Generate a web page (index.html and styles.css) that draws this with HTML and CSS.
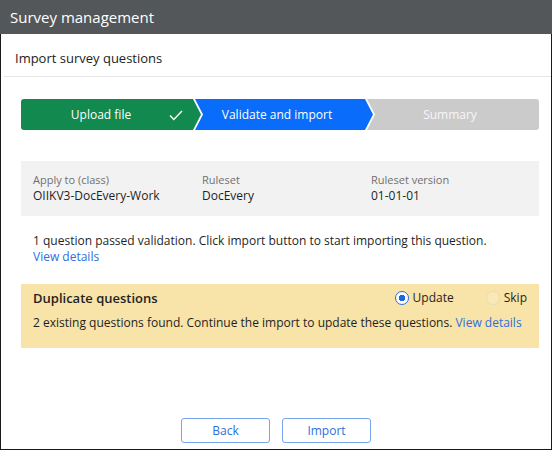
FILE: index.html
```html
<!DOCTYPE html>
<html lang="en">
<head>
  <meta charset="UTF-8">
  <title>Survey management</title>
  <meta name="viewport" content="width=device-width, initial-scale=1.0">
  <link rel="stylesheet" href="styles.css">
</head>
<body>
  <div class="dialog">
    <div class="dialog-header">Survey management</div>
    <div class="dialog-body">
      <h2 class="dialog-subtitle">Import survey questions</h2>

      <div class="dialog-content">
        <!-- Wizard steps -->
        <ol class="stepper">
          <li class="step step-done">
            <span>Upload file</span>
            <svg class="step-check" width="14" height="11" viewBox="0 0 14 11">
              <path d="M1 5.5 L4.8 9.5 L13 1" fill="none" stroke="#fff" stroke-width="1.4"/>
            </svg>
          </li>
          <li class="step step-current"><span>Validate and import</span></li>
          <li class="step step-todo"><span>Summary</span></li>
        </ol>

        <!-- Target details -->
        <div class="info-box">
          <div class="info-item">
            <span class="info-label">Apply to (class)</span>
            <span class="info-value">OIIKV3-DocEvery-Work</span>
          </div>
          <div class="info-item">
            <span class="info-label">Ruleset</span>
            <span class="info-value">DocEvery</span>
          </div>
          <div class="info-item">
            <span class="info-label">Ruleset version</span>
            <span class="info-value">01-01-01</span>
          </div>
        </div>

        <p class="message">
          1 question passed validation. Click import button to start importing this question.<br>
          <a href="#">View details</a>
        </p>

        <!-- Duplicates warning -->
        <div class="duplicate-box">
          <div class="duplicate-head">
            <h3>Duplicate questions</h3>
            <div class="radio-group">
              <label class="radio"><input type="radio" name="dup_action" checked> Update</label>
              <label class="radio radio-disabled"><input type="radio" name="dup_action" disabled> Skip</label>
            </div>
          </div>
          <p>2 existing questions found. Continue the import to update these questions. <a href="#">View details</a></p>
        </div>
      </div>

      <div class="dialog-footer">
        <button type="button" class="btn">Back</button>
        <button type="button" class="btn">Import</button>
      </div>
    </div>
  </div>
</body>
</html>
```

FILE: styles.css
```css
/* Reset & Base Styles */
* {
  box-sizing: border-box;
  margin: 0;
  padding: 0;
}
body {
  font-family: 'Open Sans', 'Noto Sans', sans-serif;
  color: #1f1f1f;
  background: #fff;
}
a {
  color: #2e6fdc;
  text-decoration: none;
}

/* Dialog */
.dialog {
  width: 552px;
  height: 450px;
  display: flex;
  flex-direction: column;
}
.dialog-header {
  height: 34px;
  background: #54575a;
  color: #fff;
  font-size: 15px;
  line-height: 34px;
  padding-left: 10px;
}
.dialog-body {
  flex: 1;
  display: flex;
  flex-direction: column;
  border: 1px solid #1a1a1a;
  border-top: none;
}
.dialog-subtitle {
  font-size: 13px;
  font-weight: 400;
  line-height: 18px;
  color: #222;
  padding: 15px 0 9px 11px;
  margin-left: 3px;
  border-bottom: 1px solid #e6e6e6;
}
.dialog-content {
  flex: 1;
  padding: 22px 12px 0 20px;
}

/* Stepper */
.stepper {
  display: flex;
  list-style: none;
  height: 31px;
}
.step {
  position: relative;
  display: flex;
  align-items: center;
  justify-content: center;
  color: #fff;
  font-size: 12px;
  margin-right: -6px;
}
.step-done {
  flex: 0 0 180px;
  background: #12894e;
  padding-right: 20px;
  border-radius: 3px 0 0 3px;
  clip-path: polygon(0 0, calc(100% - 8px) 0, 100% 50%, calc(100% - 8px) 100%, 0 100%);
}
.step-current {
  flex: 0 0 178px;
  background: #0a6cfb;
  padding-right: 14px;
  clip-path: polygon(0 0, calc(100% - 8px) 0, 100% 50%, calc(100% - 8px) 100%, 0 100%, 8px 50%);
}
.step-todo {
  flex: 1;
  margin-right: 0;
  background: #cbcbcb;
  color: #f7f7f7;
  padding-right: 6px;
  border-radius: 0 3px 3px 0;
  clip-path: polygon(0 0, 100% 0, 100% 100%, 0 100%, 8px 50%);
}
.step-check {
  position: absolute;
  right: 18px;
  top: 11px;
}

/* Info box */
.info-box {
  display: grid;
  grid-template-columns: 169px 169px 1fr;
  margin-top: 31px;
  padding: 11px 12px 12px;
  background: #f2f2f2;
}
.info-item {
  display: flex;
  flex-direction: column;
  line-height: 16px;
}
.info-label {
  font-size: 11px;
  color: #707070;
}
.info-value {
  font-size: 12px;
}

.message {
  margin-top: 17px;
  padding-left: 12px;
  font-size: 12px;
  line-height: 16px;
}

/* Duplicate questions */
.duplicate-box {
  margin-top: 19px;
  padding: 5px 12px 17px;
  background: #f8e3a8;
  font-size: 12px;
  line-height: 16px;
}
.duplicate-head {
  display: flex;
  align-items: center;
  justify-content: space-between;
  height: 18px;
  margin-bottom: 8px;
}
.duplicate-head h3 {
  font-size: 13px;
  font-weight: 600;
  line-height: 18px;
}
.radio-group {
  display: flex;
  gap: 32px;
}
.radio {
  display: flex;
  align-items: center;
  gap: 4px;
  font-size: 12px;
}
.radio input {
  appearance: none;
  width: 14px;
  height: 14px;
  border-radius: 50%;
  border: 1.5px solid #2e6fdc;
  background: #fff;
}
.radio input:checked {
  background: radial-gradient(circle, #1f66e0 0 3px, #fff 3.5px);
}
.radio-disabled input {
  border: 1px solid #e8dcb8;
  background: #fae8b6;
}

/* Footer */
.dialog-footer {
  display: flex;
  justify-content: center;
  gap: 12px;
  padding-bottom: 6px;
}
.btn {
  width: 89px;
  height: 25px;
  font-family: inherit;
  font-size: 12px;
  color: #2e6fdc;
  background: #fff;
  border: 1px solid #78a6ee;
  border-radius: 3px;
  cursor: pointer;
}
.btn:hover {
  background: #f3f7fe;
}
```
